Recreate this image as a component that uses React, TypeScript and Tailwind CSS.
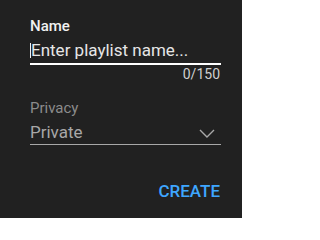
import React from "react";

export default function App() {
  return (
    <div
      className="w-[242px] h-[218px] bg-[#212121] pl-[30px] pr-[21px] pt-[16px] flex flex-col"
      style={{ fontFamily: "Roboto, 'Liberation Sans', sans-serif" }}
    >
      <div className="text-[15px] leading-[20px] font-medium text-[#f1f1f1]">Name</div>
      <div className="mt-[2px] flex items-center h-[24px] text-[17px] leading-[24px] text-[#e6e6e6]">
        <span className="w-[1px] h-[15px] bg-[#f1f1f1]" />
        <span>Enter playlist name...</span>
      </div>
      <div className="mt-[1px] h-[2px] bg-white" />
      <div className="mt-[1px] text-right text-[14px] leading-[16px] text-[#d0d0d0] pr-[1px]">0/150</div>
      <div className="mt-[16px] text-[15px] leading-[20px] text-[#8c8c8c]">Privacy</div>
      <div className="mt-[2px] flex items-center justify-between h-[24px] border-b border-[#a8a8a8] box-content">
        <span className="text-[17px] leading-[24px] text-[#a8a8a8]">Private</span>
        <svg width="16" height="9" viewBox="0 0 16 9" className="mr-[6px] mt-[2px]">
          <polyline points="1,1 8,8 15,1" fill="none" stroke="#a8a8a8" strokeWidth="1.4" />
        </svg>
      </div>
      <div className="mt-[34px] flex justify-end pr-[1px]">
        <span className="text-[17px] leading-[24px] font-medium text-[#3ea6ff]">CREATE</span>
      </div>
    </div>
  );
}
